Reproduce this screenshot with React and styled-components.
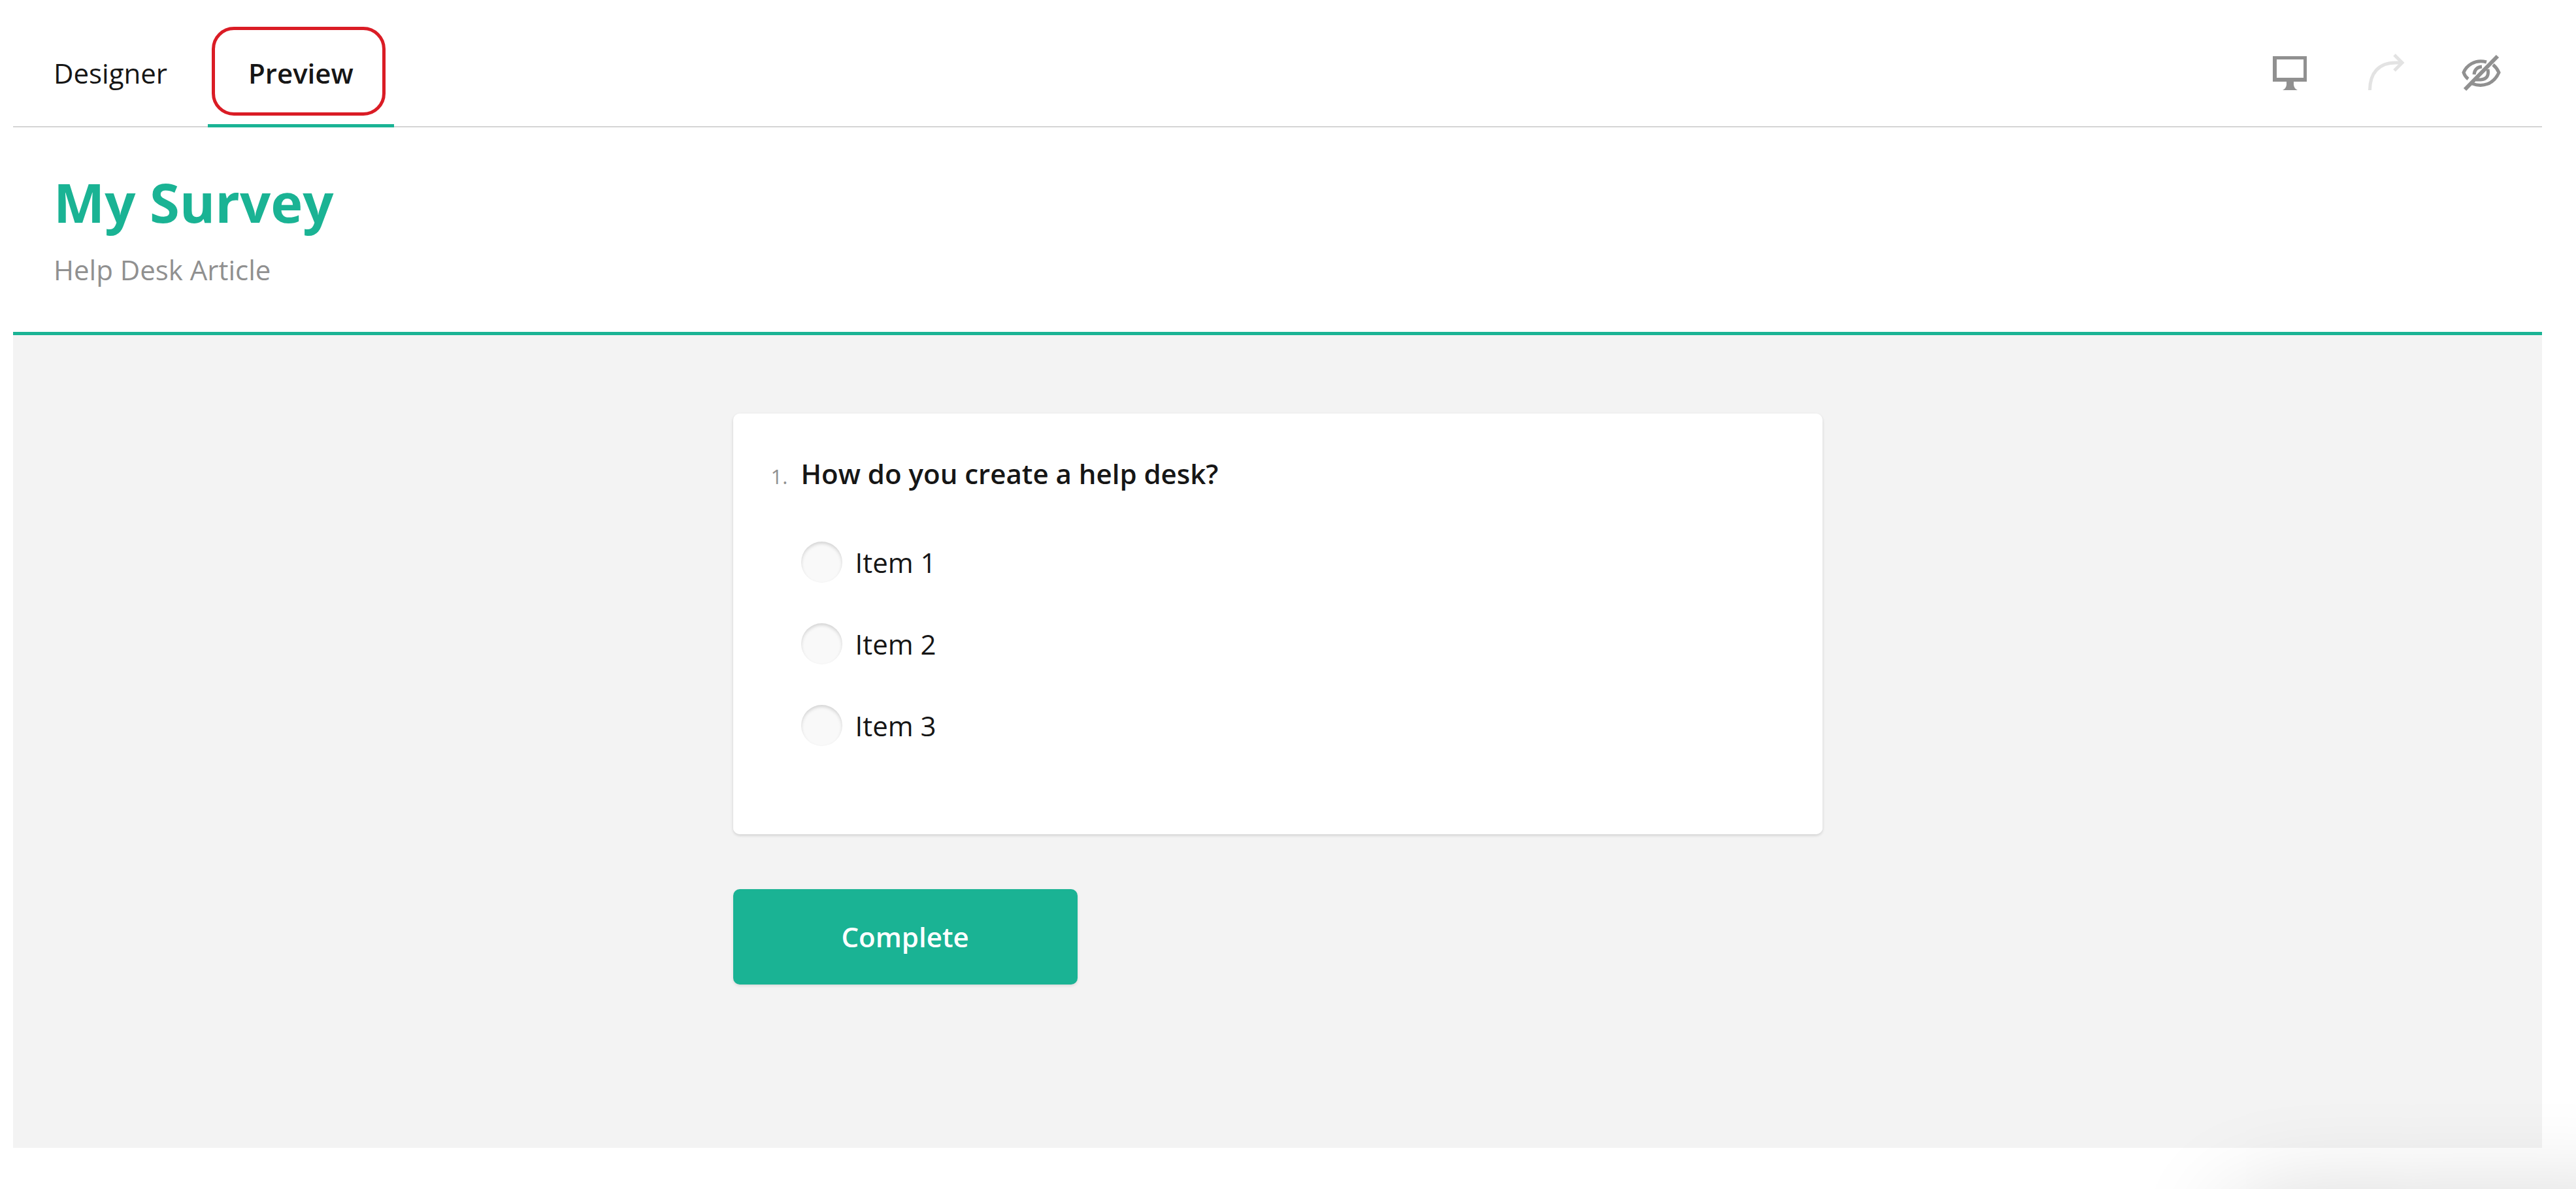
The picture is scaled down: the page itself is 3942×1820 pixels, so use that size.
import { useState } from "react";
import styled, { createGlobalStyle } from "styled-components";

const GlobalStyle = createGlobalStyle`
  * {
    box-sizing: border-box;
  }
  body {
    margin: 0;
    background-color: #fff;
    color: #161616;
    font-family: "Open Sans", "Noto Sans", sans-serif;
    font-size: 42px;
    line-height: 62px;
  }
`;

const Page = styled.div`
  position: relative;
  min-height: 100vh;
  padding: 0 52px 62px 20px;
  overflow: hidden;
`;

const Toolbar = styled.header`
  display: flex;
  align-items: stretch;
  justify-content: space-between;
  padding-top: 30px;
  box-shadow: inset 0 -2px #d4d4d4;
`;

const Tabs = styled.nav`
  display: flex;
`;

const Tab = styled.button`
  position: relative;
  height: 165px;
  padding: 4px 62px 0;
  border: 0;
  border-bottom: 5px solid ${({ $active }) => ($active ? "#1ab394" : "transparent")};
  background: none;
  color: inherit;
  font: inherit;
  font-weight: ${({ $active }) => ($active ? 600 : 400)};
  cursor: pointer;
`;

const Highlight = styled.span`
  position: absolute;
  inset: 11px 13px 13px 6px;
  border: 5px solid #da1c25;
  border-radius: 34px;
  pointer-events: none;
`;

const Actions = styled.div`
  display: flex;
  align-items: center;
  gap: 76px;
  padding: 0 58px 4px 0;
`;

const IconButton = styled.button`
  display: flex;
  padding: 0;
  border: 0;
  background: none;
  color: ${({ disabled }) => (disabled ? "#e3e3e3" : "#909090")};
  cursor: pointer;
`;

const Icon = styled.svg`
  width: 70px;
  height: 70px;
`;

const SurveyHeader = styled.div`
  padding: 57px 62px 64px;
  border-bottom: 5px solid #1ab394;
`;

const Title = styled.h1`
  margin: 0;
  color: #1ab394;
  font-size: 83px;
  font-weight: 700;
  line-height: 114px;
`;

const Description = styled.p`
  margin: 16px 0 0;
  color: #909090;
`;

const SurveyBody = styled.main`
  padding: 120px 62px 250px;
  background-color: #f3f3f3;
`;

const Form = styled.form`
  max-width: 1667px;
  margin: 0 auto;
`;

const Question = styled.fieldset`
  display: block;
  min-width: 0;
  margin: 0 0 84px;
  padding: 61px 58px 104px;
  border: 0;
  border-radius: 10px;
  background-color: #fff;
  box-shadow: 0 2px 4px rgba(0, 0, 0, 0.15);
`;

const QuestionTitle = styled.legend`
  display: flex;
  float: left;
  width: 100%;
  align-items: baseline;
  margin-bottom: 38px;
  padding: 0;
  font-weight: 600;
`;

const Number = styled.span`
  width: 46px;
  color: #909090;
  font-size: 31px;
  font-weight: 400;
`;

const Choices = styled.div`
  clear: both;
  padding-left: 46px;
`;

const Choice = styled.label`
  display: flex;
  width: fit-content;
  align-items: center;
  gap: 20px;
  height: 125px;
`;

const Radio = styled.input`
  width: 63px;
  height: 63px;
  margin: 0;
  appearance: none;
  border-radius: 50%;
  background-color: #f9f9f9;
  box-shadow: inset 0 3px 5px rgba(0, 0, 0, 0.15);

  &:checked {
    border: 20px solid #1ab394;
    background-color: #fff;
  }
`;

const CompleteButton = styled.button`
  height: 146px;
  padding: 0 166px;
  border: 0;
  border-radius: 10px;
  background-color: #1ab394;
  box-shadow: 0 2px 4px rgba(0, 0, 0, 0.1);
  color: #fff;
  font: inherit;
  font-weight: 600;
  cursor: pointer;
`;

const CornerShadow = styled.div`
  position: fixed;
  top: calc(100% + 24px);
  right: -300px;
  width: 820px;
  height: 400px;
  border-radius: 30px;
  box-shadow: 0 0 160px rgba(0, 0, 0, 0.2);
  pointer-events: none;
`;

const DesktopIcon = () => (
  <Icon viewBox="0 0 70 70" fill="currentColor" aria-hidden="true">
    <path fillRule="evenodd" d="M8 10h52v39H8zM14 15v28h41V15z" />
    <path d="M29 48h11v6q1 6 6 8H23q5-2 6-8z" />
  </Icon>
);

const RedoIcon = () => (
  <Icon viewBox="0 0 70 70" fill="none" stroke="currentColor" strokeWidth="5" aria-hidden="true">
    <path d="M10.500 62C10.500 36 24 20 50 20H60" />
    <path d="M48 8L60 20L48 32" />
  </Icon>
);

const HiddenIcon = () => (
  <Icon viewBox="0 0 70 70" fill="none" stroke="currentColor" strokeWidth="5" aria-hidden="true">
    <path d="M43 19C25 14 12 25 8 35Q10 41 15 45" />
    <path d="M53 23Q59 28 62 35C54 53 37 58 21 52" />
    <path d="M36 26Q25 27 24 38" />
    <path d="M45 30Q48 45 34 46H27" />
    <path d="M10 61L60 10" strokeWidth="6" />
  </Icon>
);

const items = ["Item 1", "Item 2", "Item 3"];

const App = () => {
  const [tab, setTab] = useState("Preview");

  return (
    <>
      <GlobalStyle />
      <Page>
        <Toolbar>
          <Tabs>
            {["Designer", "Preview"].map((name) => (
              <Tab key={name} type="button" $active={tab === name} onClick={() => setTab(name)}>
                {name}
                {name === "Preview" && <Highlight />}
              </Tab>
            ))}
          </Tabs>
          <Actions>
            <IconButton type="button" aria-label="Desktop">
              <DesktopIcon />
            </IconButton>
            <IconButton type="button" aria-label="Redo" disabled>
              <RedoIcon />
            </IconButton>
            <IconButton type="button" aria-label="Show invisible elements">
              <HiddenIcon />
            </IconButton>
          </Actions>
        </Toolbar>
        <SurveyHeader>
          <Title>My Survey</Title>
          <Description>Help Desk Article</Description>
        </SurveyHeader>
        <SurveyBody>
          <Form onSubmit={(e) => e.preventDefault()}>
            <Question>
              <QuestionTitle>
                <Number>1.</Number>
                How do you create a help desk?
              </QuestionTitle>
              <Choices>
                {items.map((item) => (
                  <Choice key={item}>
                    <Radio type="radio" name="question1" value={item} />
                    {item}
                  </Choice>
                ))}
              </Choices>
            </Question>
            <CompleteButton type="submit">Complete</CompleteButton>
          </Form>
        </SurveyBody>
      </Page>
      <CornerShadow />
    </>
  );
};

export default App;
